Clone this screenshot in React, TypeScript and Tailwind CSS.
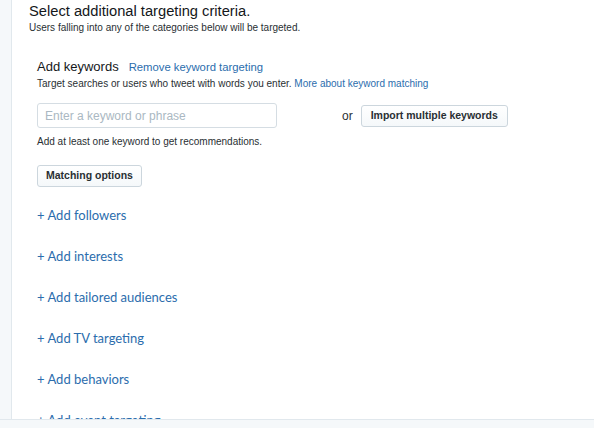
const links = [
  "Add followers",
  "Add interests",
  "Add tailored audiences",
  "Add TV targeting",
  "Add behaviors",
  "Add event targeting",
];

export default function App() {
  return (
    <div
      className="relative flex h-[428px] w-[594px] flex-col overflow-hidden bg-white text-[#292f33]"
      style={{ fontFamily: '"Liberation Sans", Arial, sans-serif' }}
    >
      <div className="flex h-[419px] overflow-hidden">
        {/* left rail */}
        <div className="w-[12px] shrink-0 border-r border-[#e1e8ed] bg-[#f5f8fa]" />

        <div className="flex-1 pl-[17px]">
          <h2 className="mt-[1px] text-[14.7px] leading-[20px] text-[#14171a]">
            Select additional targeting criteria.
          </h2>
          <p className="text-[10px] leading-[13px] text-[#292f33]">
            Users falling into any of the categories below will be targeted.
          </p>

          <div className="pl-[8px] pt-[24px]">
            <div className="flex items-baseline gap-[10px]">
              <span className="text-[13px] leading-[18px] text-[#14171a]">Add keywords</span>
              <a className="text-[11.3px] text-[#2b6dad]">Remove keyword targeting</a>
            </div>
            <p className="mt-[1px] text-[10px] leading-[14px]">
              Target searches or users who tweet with words you enter.{" "}
              <a className="text-[#2b6dad]">More about keyword matching</a>
            </p>

            <div className="mt-[12px] flex items-center">
              <input
                className="h-[25px] w-[240px] rounded-[3px] border border-[#d5dde3] px-[7px] text-[12px] outline-none placeholder:text-[#aab8c2]"
                placeholder="Enter a keyword or phrase"
              />
              <span className="ml-[65px] text-[12px]">or</span>
              <button className="ml-[8px] h-[22px] rounded-[3px] border border-[#ccd6dd] bg-gradient-to-b from-white to-[#f5f8fa] px-[9px] text-[10.5px] font-bold text-[#292f33]">
                Import multiple keywords
              </button>
            </div>

            <p className="mt-[7px] text-[10px] leading-[13px]">
              Add at least one keyword to get recommendations.
            </p>

            <button className="mt-[17px] h-[22px] rounded-[3px] border border-[#ccd6dd] bg-gradient-to-b from-white to-[#f5f8fa] px-[8px] text-[10.5px] font-bold text-[#292f33]">
              Matching options
            </button>

            <div
              className="mt-[19px] flex flex-col gap-[23px]"
              style={{ fontFamily: "Lato, 'Liberation Sans', sans-serif" }}
            >
              {links.map((l) => (
                <a key={l} className="text-[13px] leading-[18px] text-[#2b6dad]">
                  + {l}
                </a>
              ))}
            </div>
          </div>
        </div>
      </div>

      {/* bottom bar */}
      <div className="h-[9px] border-t border-[#e1e8ed] bg-[#f5f8fa]" />
    </div>
  );
}
